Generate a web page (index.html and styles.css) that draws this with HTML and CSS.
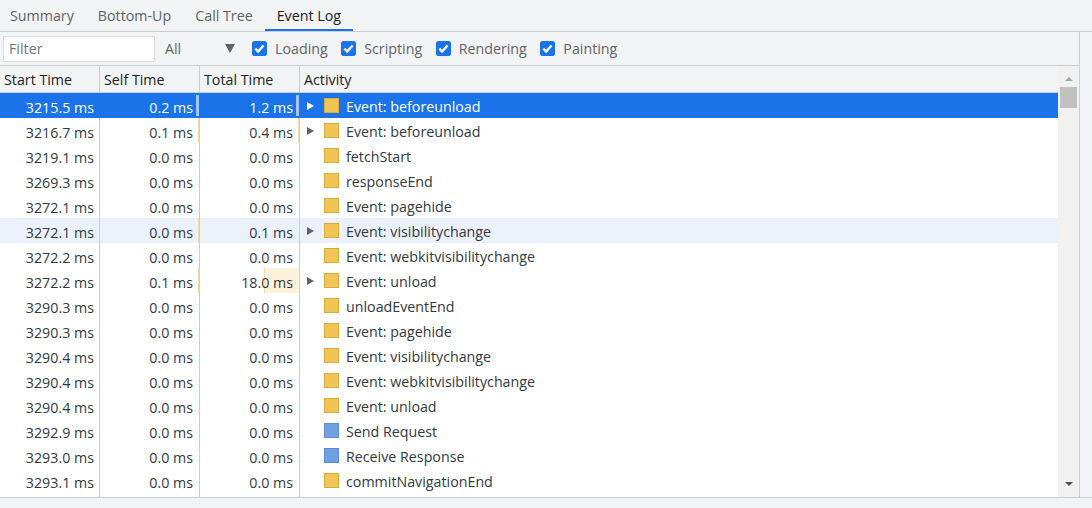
FILE: index.html
```html
<!DOCTYPE html>
<html>
<head>
<meta charset="utf-8">
<link rel="stylesheet" href="styles.css">
</head>
<body>
<div class="tabs">
  <div class="tab first">Summary</div>
  <div class="tab">Bottom-Up</div>
  <div class="tab">Call Tree</div>
  <div class="tab active">Event Log</div>
</div>
<div class="main">
  <div class="pane">
    <div class="toolbar">
      <div class="filter">Filter</div>
      <div class="select"><span>All</span><span class="arrow"></span></div>
      <label class="check"><span class="cb"><svg viewBox="0 0 15 15" width="15" height="15"><path d="M3.3 7.6 L6.2 10.5 L11.6 4.4" fill="none" stroke="#fff" stroke-width="2.3"/></svg></span>Loading</label>
      <label class="check"><span class="cb"><svg viewBox="0 0 15 15" width="15" height="15"><path d="M3.3 7.6 L6.2 10.5 L11.6 4.4" fill="none" stroke="#fff" stroke-width="2.3"/></svg></span>Scripting</label>
      <label class="check"><span class="cb"><svg viewBox="0 0 15 15" width="15" height="15"><path d="M3.3 7.6 L6.2 10.5 L11.6 4.4" fill="none" stroke="#fff" stroke-width="2.3"/></svg></span>Rendering</label>
      <label class="check"><span class="cb"><svg viewBox="0 0 15 15" width="15" height="15"><path d="M3.3 7.6 L6.2 10.5 L11.6 4.4" fill="none" stroke="#fff" stroke-width="2.3"/></svg></span>Painting</label>
    </div>
    <div class="grid">
      <div class="table">
        <div class="row header">
          <div class="cell">Start Time</div>
          <div class="cell">Self Time</div>
          <div class="cell">Total Time</div>
          <div class="cell">Activity</div>
        </div>
        <div class="row selected">
          <div class="cell num"><span class="t">3215.5 ms</span></div>
          <div class="cell num"><span class="bar" style="width:3px"></span><span class="t">0.2 ms</span></div>
          <div class="cell num"><span class="bar" style="width:3px"></span><span class="t">1.2 ms</span></div>
          <div class="cell act"><span class="tri"></span><span class="sq y"></span><span class="t">Event: beforeunload</span></div>
        </div>
        <div class="row">
          <div class="cell num"><span class="t">3216.7 ms</span></div>
          <div class="cell num"><span class="bar" style="width:1px"></span><span class="t">0.1 ms</span></div>
          <div class="cell num"><span class="bar" style="width:1px"></span><span class="t">0.4 ms</span></div>
          <div class="cell act"><span class="tri"></span><span class="sq y"></span><span class="t">Event: beforeunload</span></div>
        </div>
        <div class="row">
          <div class="cell num"><span class="t">3219.1 ms</span></div>
          <div class="cell num"><span class="t">0.0 ms</span></div>
          <div class="cell num"><span class="t">0.0 ms</span></div>
          <div class="cell act"><span class="notri"></span><span class="sq y"></span><span class="t">fetchStart</span></div>
        </div>
        <div class="row">
          <div class="cell num"><span class="t">3269.3 ms</span></div>
          <div class="cell num"><span class="t">0.0 ms</span></div>
          <div class="cell num"><span class="t">0.0 ms</span></div>
          <div class="cell act"><span class="notri"></span><span class="sq y"></span><span class="t">responseEnd</span></div>
        </div>
        <div class="row">
          <div class="cell num"><span class="t">3272.1 ms</span></div>
          <div class="cell num"><span class="t">0.0 ms</span></div>
          <div class="cell num"><span class="t">0.0 ms</span></div>
          <div class="cell act"><span class="notri"></span><span class="sq y"></span><span class="t">Event: pagehide</span></div>
        </div>
        <div class="row hover">
          <div class="cell num"><span class="t">3272.1 ms</span></div>
          <div class="cell num"><span class="bar" style="width:1px"></span><span class="t">0.0 ms</span></div>
          <div class="cell num"><span class="t">0.1 ms</span></div>
          <div class="cell act"><span class="tri"></span><span class="sq y"></span><span class="t">Event: visibilitychange</span></div>
        </div>
        <div class="row">
          <div class="cell num"><span class="t">3272.2 ms</span></div>
          <div class="cell num"><span class="t">0.0 ms</span></div>
          <div class="cell num"><span class="t">0.0 ms</span></div>
          <div class="cell act"><span class="notri"></span><span class="sq y"></span><span class="t">Event: webkitvisibilitychange</span></div>
        </div>
        <div class="row">
          <div class="cell num"><span class="t">3272.2 ms</span></div>
          <div class="cell num"><span class="bar" style="width:1px"></span><span class="t">0.1 ms</span></div>
          <div class="cell num"><span class="bar" style="width:35px"></span><span class="t">18.0 ms</span></div>
          <div class="cell act"><span class="tri"></span><span class="sq y"></span><span class="t">Event: unload</span></div>
        </div>
        <div class="row">
          <div class="cell num"><span class="t">3290.3 ms</span></div>
          <div class="cell num"><span class="t">0.0 ms</span></div>
          <div class="cell num"><span class="t">0.0 ms</span></div>
          <div class="cell act"><span class="notri"></span><span class="sq y"></span><span class="t">unloadEventEnd</span></div>
        </div>
        <div class="row">
          <div class="cell num"><span class="t">3290.3 ms</span></div>
          <div class="cell num"><span class="t">0.0 ms</span></div>
          <div class="cell num"><span class="t">0.0 ms</span></div>
          <div class="cell act"><span class="notri"></span><span class="sq y"></span><span class="t">Event: pagehide</span></div>
        </div>
        <div class="row">
          <div class="cell num"><span class="t">3290.4 ms</span></div>
          <div class="cell num"><span class="t">0.0 ms</span></div>
          <div class="cell num"><span class="t">0.0 ms</span></div>
          <div class="cell act"><span class="notri"></span><span class="sq y"></span><span class="t">Event: visibilitychange</span></div>
        </div>
        <div class="row">
          <div class="cell num"><span class="t">3290.4 ms</span></div>
          <div class="cell num"><span class="t">0.0 ms</span></div>
          <div class="cell num"><span class="t">0.0 ms</span></div>
          <div class="cell act"><span class="notri"></span><span class="sq y"></span><span class="t">Event: webkitvisibilitychange</span></div>
        </div>
        <div class="row">
          <div class="cell num"><span class="t">3290.4 ms</span></div>
          <div class="cell num"><span class="t">0.0 ms</span></div>
          <div class="cell num"><span class="t">0.0 ms</span></div>
          <div class="cell act"><span class="notri"></span><span class="sq y"></span><span class="t">Event: unload</span></div>
        </div>
        <div class="row">
          <div class="cell num"><span class="t">3292.9 ms</span></div>
          <div class="cell num"><span class="t">0.0 ms</span></div>
          <div class="cell num"><span class="t">0.0 ms</span></div>
          <div class="cell act"><span class="notri"></span><span class="sq b"></span><span class="t">Send Request</span></div>
        </div>
        <div class="row">
          <div class="cell num"><span class="t">3293.0 ms</span></div>
          <div class="cell num"><span class="t">0.0 ms</span></div>
          <div class="cell num"><span class="t">0.0 ms</span></div>
          <div class="cell act"><span class="notri"></span><span class="sq b"></span><span class="t">Receive Response</span></div>
        </div>
        <div class="row">
          <div class="cell num"><span class="t">3293.1 ms</span></div>
          <div class="cell num"><span class="t">0.0 ms</span></div>
          <div class="cell num"><span class="t">0.0 ms</span></div>
          <div class="cell act"><span class="notri"></span><span class="sq y"></span><span class="t">commitNavigationEnd</span></div>
        </div>
        <div class="row filler">
          <div class="cell"></div>
          <div class="cell"></div>
          <div class="cell"></div>
          <div class="cell"></div>
        </div>
      </div>
      <div class="scrollbar">
        <span class="up"></span>
        <span class="thumb"></span>
        <span class="track"></span>
        <span class="down"></span>
      </div>
    </div>
  </div>
  <div class="strip"></div>
</div>
</body>
</html>
```
FILE: styles.css
```css
* { box-sizing: border-box; }
html, body { margin: 0; padding: 0; }
body {
  width: 1092px;
  height: 508px;
  overflow: hidden;
  background: #f1f3f4;
  font-family: "Open Sans", "Noto Sans", sans-serif;
  font-size: 14.25px;
  color: #303942;
}
.tabs {
  display: flex;
  height: 32px;
  border-bottom: 1px solid #cbcdd1;
}
.tab {
  padding: 0 12px;
  line-height: 31px;
  height: 31px;
  color: #5f6368;
}
.tab.first { padding-left: 10px; }
.tab.active {
  color: #202124;
  border-bottom: 2px solid #1a73e8;
}
.main {
  display: flex;
  height: 466px;
  border-bottom: 1px solid #cbcdd1;
}
.pane {
  width: 1080px;
  border-right: 1px solid #cbcdd1;
  display: flex;
  flex-direction: column;
}
.strip { flex: 1; }
.toolbar {
  height: 34px;
  border-bottom: 1px solid #cbcdd1;
  display: flex;
  align-items: center;
  padding-left: 3px;
}
.filter {
  width: 152px;
  height: 26px;
  background: #fff;
  border: 1px solid #dcdcdc;
  color: #757575;
  padding-left: 5px;
  line-height: 24px;
}
.select {
  width: 91px;
  display: flex;
  justify-content: space-between;
  align-items: center;
  padding: 0 11px 0 10px;
  color: #5f6368;
  margin-right: 6px;
}
.arrow {
  width: 0; height: 0;
  border-left: 5px solid transparent;
  border-right: 5px solid transparent;
  border-top: 9px solid #5f6368;
}
.check {
  display: flex;
  align-items: center;
  color: #5f6368;
  margin-right: 13.5px;
}
.cb {
  width: 15px;
  height: 15px;
  background: #1a73e8;
  border-radius: 2.5px;
  margin-right: 8px;
  display: flex;
  align-items: center;
  justify-content: center;
}
.cb svg { display: block; }
.grid {
  flex: 1;
  display: flex;
  min-height: 0;
}
.table {
  width: 1058px;
  background: #fff;
  display: flex;
  flex-direction: column;
}
.row {
  display: grid;
  grid-template-columns: 100px 100px 100px 1fr;
  height: 25px;
  line-height: 25px;
  color: #303942;
}
.cell {
  border-right: 1px solid #cbcdd1;
  white-space: nowrap;
  overflow: hidden;
  position: relative;
}
.cell:last-child { border-right: none; }
.t {
  position: relative;
  display: inline-block;
  padding-top: 2px;
  line-height: 25px;
}
.header {
  height: 27px;
  line-height: 28px;
  background: #f1f3f4;
  border-bottom: 1px solid #cbcdd1;
  color: #202124;
}
.header .cell { padding-left: 4px; }
.num {
  text-align: right;
  padding-right: 6px;
  line-height: 23px;
}
.row .cell.num:first-child { padding-right: 5px; }
.bar {
  position: absolute;
  right: 0;
  top: 0;
  bottom: 0;
  background: #fcf2da;
  border-left: 1px solid #f2dba4;
}
.selected { background: #1a73e8; color: #fff; }
.selected .bar { background: #a5c6f7; border-left: none; top: 2px; bottom: 2px; }
.selected .cell { border-right-color: #1a73e8; }
.hover { background: #eaf1fb; }
.act {
  display: flex;
  align-items: center;
  padding-left: 7px;
}
.tri {
  width: 0; height: 0;
  border-top: 4.5px solid transparent;
  border-bottom: 4.5px solid transparent;
  border-left: 7px solid #5f6368;
  margin-right: 10px;
}
.selected .tri { border-left-color: #fff; }
.notri { width: 7px; margin-right: 10px; }
.sq {
  width: 15px;
  height: 15px;
  margin-right: 7px;
  flex: none;
}
.sq.y { background: #f0c556; border: 1px solid #d9ab3a; }
.sq.b { background: #6fa1e1; border: 1px solid #5a8dd3; }
.filler { flex: 1; height: auto; }
.scrollbar {
  width: 21px;
  background: #f1f1f1;
  display: flex;
  flex-direction: column;
  align-items: center;
  padding: 11px 0 11px;
}
.up {
  width: 0; height: 0;
  border-left: 4px solid transparent;
  border-right: 4px solid transparent;
  border-bottom: 4px solid #a3a3a3;
  margin-bottom: 6px;
}
.thumb {
  width: 17px;
  height: 21px;
  background: #c1c1c1;
}
.track { flex: 1; }
.down {
  width: 0; height: 0;
  border-left: 4px solid transparent;
  border-right: 4px solid transparent;
  border-top: 4px solid #505050;
}
```
